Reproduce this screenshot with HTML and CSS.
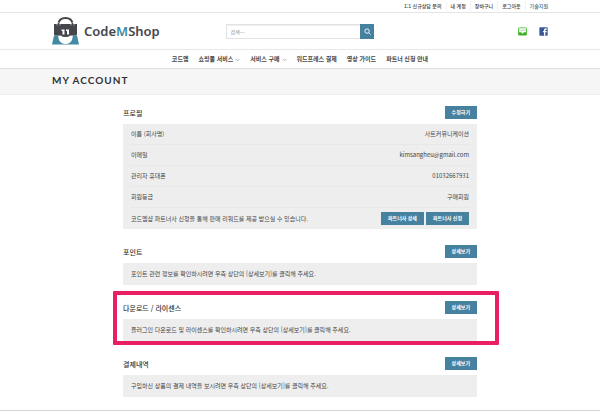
FILE: index.html
```html
<!DOCTYPE html>
<html lang="ko">
<head>
  <meta charset="utf-8">
  <title>My Account - CodeMShop</title>
  <link rel="stylesheet" href="styles.css">
</head>
<body>
  <div class="top-bar">
    <ul class="container top-links">
      <li><a href="#">1:1 신규상담 문의</a></li>
      <li><a href="#">내 계정</a></li>
      <li><a href="#">장바구니</a></li>
      <li><a href="#">로그아웃</a></li>
      <li><a href="#" class="active">기술지원</a></li>
    </ul>
  </div>

  <header class="header">
    <div class="container header-inner">
      <a href="#" class="logo">
        <svg class="logo-icon" viewBox="0 0 54 56" aria-hidden="true">
          <path d="M4 37 L0 55 H54 L50 37 Z" fill="#4389a2"/>
          <path d="M12 37 H42 L40 46 Q36 54 27 54 Q18 54 14 46 Z" fill="#fff"/>
          <path d="M4 14 H50 V34 Q50 37 47 37 H36 Q34 40 27 40 Q20 40 18 37 H7 Q4 37 4 34 Z" fill="#45464b"/>
          <path d="M13 18 V14 Q14 2 27 2 Q40 2 41 14 V18" fill="none" stroke="#45464b" stroke-width="4"/>
          <path d="M10 17 V14 Q10 11 13 11 Q16 11 16 14 V17 M38 17 V14 Q38 11 41 11 Q44 11 44 14 V17" fill="none" stroke="#fff" stroke-width="1"/>
          <path d="M19 25 H25 V35 H21 V28 H19 Z M28 25 H34 V35 H30 V28 H28 Z" fill="#fff"/>
        </svg>
        <span class="logo-text">Code<span class="logo-m">M</span>Shop</span>
      </a>
      <form class="search">
        <input type="search" class="search-input" placeholder="검색…" aria-label="검색">
        <button type="button" class="search-btn" aria-label="검색하기">
          <svg viewBox="0 0 16 16" aria-hidden="true">
            <circle cx="7" cy="7" r="5" fill="none" stroke="#fff" stroke-width="2"/>
            <path d="M10.500 10.500 L15 15" stroke="#fff" stroke-width="2"/>
          </svg>
        </button>
      </form>
      <div class="social">
        <a href="#" aria-label="네이버 톡톡">
          <svg viewBox="0 0 27 27" aria-hidden="true">
            <rect x="0.500" y="1.500" width="26" height="24" rx="4" fill="#3bb122"/>
            <path d="M3 4 H24 V16 H18 L13.500 20 L9 16 H3 Z" fill="#fff"/>
            <path d="M5 8 V12 M4 8 H7 M9 9 H12 V12 H9 Z M15 8 V12 M14 8 H17 M19 9 H22 V12 H19 Z" fill="none" stroke="#6cae58" stroke-width="1"/>
          </svg>
        </a>
        <a href="#" aria-label="페이스북">
          <svg viewBox="0 0 27 27" aria-hidden="true">
            <rect x="1" y="1" width="25" height="25" rx="2" fill="#3b5998"/>
            <path d="M15 26 V16 H12 V12 H15 V9 Q15 4 20 4 H23 V8 H21 Q19 8 19 10 V12 H23 L22.500 16 H19 V26 Z" fill="#fff"/>
          </svg>
        </a>
      </div>
    </div>
  </header>

  <nav class="main-nav">
    <a href="#">코드엠</a>
    <a href="#">쇼핑몰 서비스
      <svg class="chevron" viewBox="0 0 8 8" aria-hidden="true"><path d="M1 3 L4 6 L7 3" fill="none" stroke="#888" stroke-width="1"/></svg></a>
    <a href="#">서비스 구매
      <svg class="chevron" viewBox="0 0 8 8" aria-hidden="true"><path d="M1 3 L4 6 L7 3" fill="none" stroke="#888" stroke-width="1"/></svg></a>
    <a href="#">워드프레스 결제</a>
    <a href="#">영상 가이드</a>
    <a href="#">파트너 신청 안내</a>
  </nav>

  <div class="page-title">
    <div class="container">
      <h1>MY ACCOUNT</h1>
    </div>
  </div>

  <main class="account">
    <section class="section">
      <div class="section-head">
        <h2>프로필</h2>
        <button type="button" class="btn">수정하기</button>
      </div>
      <div class="box">
        <dl class="profile">
          <div class="row"><dt>이름 (회사명)</dt><dd>사트커뮤니케이션</dd></div>
          <div class="row"><dt>이메일</dt><dd>kimsangheu@gmail.com</dd></div>
          <div class="row"><dt>관리자 휴대폰</dt><dd>01032667931</dd></div>
          <div class="row"><dt>회원등급</dt><dd>구매회원</dd></div>
        </dl>
        <div class="row">
          <p>코드엠샵 파트너사 신청을 통해 판매 리워드를 제공 받으실 수 있습니다.</p>
          <div class="partner-buttons">
            <button type="button" class="btn">파트너사 상세</button>
            <button type="button" class="btn">파트너사 신청</button>
          </div>
        </div>
      </div>
    </section>

    <section class="section">
      <div class="section-head">
        <h2>포인트</h2>
        <button type="button" class="btn">상세보기</button>
      </div>
      <div class="box">
        <p class="row">포인트 관련 정보를 확인하시려면 우측 상단의 [상세보기]를 클릭해 주세요.</p>
      </div>
    </section>

    <section class="section highlight">
      <div class="section-head">
        <h2>다운로드 / 라이센스</h2>
        <button type="button" class="btn">상세보기</button>
      </div>
      <div class="box">
        <p class="row">플러그인 다운로드 및 라이센스를 확인하시려면 우측 상단의 [상세보기]를 클릭해 주세요.</p>
      </div>
    </section>

    <section class="section">
      <div class="section-head">
        <h2>결제내역</h2>
        <button type="button" class="btn">상세보기</button>
      </div>
      <div class="box">
        <p class="row">구입하신 상품의 결제 내역을 보시려면 우측 상단의 [상세보기]를 클릭해 주세요.</p>
      </div>
    </section>
  </main>

  <footer class="footer"></footer>
</body>
</html>
```

FILE: styles.css
```css
* {
  box-sizing: border-box;
}

body {
  margin: 0;
  background-color: #fff;
  color: #444;
  font-family: "Noto Sans CJK KR", sans-serif;
  font-size: 6px;
  line-height: 10px;
}

a {
  color: inherit;
  text-decoration: none;
}

h1, h2, p, dl, dd, ul {
  margin: 0;
  padding: 0;
}

button {
  border: none;
  padding: 0;
  background-color: #4682a0;
  color: #fff;
  font-family: inherit;
  cursor: pointer;
}

svg {
  display: block;
}

.container {
  padding: 0 52px;
}

/* top bar */
.top-bar {
  border-bottom: 1px solid #e4e4e4;
}

.top-links {
  display: flex;
  justify-content: flex-end;
  padding-top: 1px;
  padding-bottom: 1px;
  list-style: none;
  font-size: 5px;
  font-weight: 500;
}

.top-links li + li {
  margin-left: 4px;
  padding-left: 4px;
  border-left: 1px solid #f2f2f2;
}

.top-links .active {
  color: #35708a;
}

/* header */
.header {
  border-bottom: 1px solid #e8e8e8;
}

.header-inner {
  display: flex;
  align-items: center;
  padding-top: 4px;
  padding-bottom: 4px;
}

.logo {
  display: flex;
  align-items: center;
  width: 35%;
}

.logo-icon {
  width: 27px;
  height: 28px;
  margin-right: 5px;
}

.logo-text {
  color: #45464b;
  font-family: "Noto Sans", sans-serif;
  font-size: 13px;
  font-weight: 600;
  line-height: 20px;
}

.logo-m {
  color: #4389a2;
}

.search {
  display: flex;
  width: 30%;
}

.search-input {
  flex: 1;
  min-width: 0;
  height: 15px;
  padding: 0 4px;
  border: 1px solid #e2e2e2;
  border-right: none;
  border-radius: 0;
  background-color: #fff;
  box-shadow: inset 0 1px 1px #f0f0f0;
  font-family: inherit;
  font-size: 5px;
}

.search-input::placeholder {
  color: #888;
}

.search-btn {
  display: flex;
  align-items: center;
  justify-content: center;
  width: 14px;
  height: 15px;
}

.search-btn svg {
  width: 7px;
  height: 7px;
}

.social {
  display: flex;
  gap: 12px;
  margin-left: auto;
}

.social svg {
  width: 9px;
  height: 9px;
}

/* navigation */
.main-nav {
  display: flex;
  justify-content: center;
  gap: 10px;
  padding: 4px 0;
  font-weight: 700;
}

.main-nav a {
  display: flex;
  align-items: center;
  gap: 2px;
}

.chevron {
  width: 5px;
  height: 5px;
}

.page-title {
  padding: 4px 0 6px;
  border-top: 1px solid #e0e0e0;
  border-bottom: 1px solid #efefef;
  background-color: #f6f6f6;
}

.page-title h1 {
  color: #333;
  font-family: Lato, sans-serif;
  font-size: 10px;
  font-weight: 700;
  letter-spacing: 1px;
  line-height: 15px;
}

/* account sections */
.account {
  width: 59%;
  margin: 0 auto;
  padding: 11px 0 13px;
}

.section + .section {
  margin-top: 16px;
}

.section-head {
  display: flex;
  align-items: center;
  justify-content: space-between;
  margin-bottom: 5px;
}

.section-head h2 {
  color: #333;
  font-size: 7px;
  font-weight: 500;
  line-height: 12px;
}

.btn {
  height: 13px;
  padding: 0 7px 1px;
  font-size: 5px;
  font-weight: 700;
  line-height: 12px;
}

.box {
  padding: 0 8px;
  background-color: #eee;
}

.row {
  display: flex;
  align-items: center;
  justify-content: space-between;
  padding: 6px 0;
}

.profile .row {
  padding: 5px 0;
  border-bottom: 1px solid #e8e8e8;
}

.profile + .row {
  padding: 4px 0;
}

.partner-buttons {
  display: flex;
  gap: 2px;
}

/* frame drawn over the section without moving it */
.highlight {
  position: relative;
}

.highlight::after {
  content: "";
  position: absolute;
  top: -10px;
  right: -22px;
  bottom: -4px;
  left: -10px;
  border: 4px solid #e91e63;
  border-radius: 1px;
}

.footer {
  border-top: 1px solid #d5d5d5;
}
```
